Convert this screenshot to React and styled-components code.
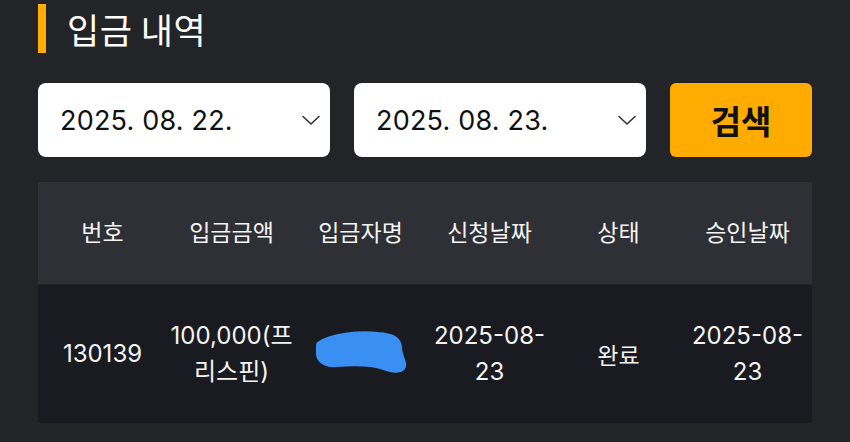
import React from 'react'
import styled, { createGlobalStyle } from 'styled-components'

const GlobalStyle = createGlobalStyle`
  html, body {
    margin: 0;
    padding: 0;
    background: #232428;
  }
  body {
    font-family: Inter, "Noto Sans CJK KR", sans-serif;
    color: #fff;
  }
`

const Page = styled.div`
  width: 850px;
  height: 442px;
  box-sizing: border-box;
  padding: 4px 38px 0 38px;
  overflow: hidden;
`

const Title = styled.h1`
  display: flex;
  align-items: center;
  gap: 21px;
  margin: 0;
  height: 49px;
  font-family: "Noto Sans CJK KR", sans-serif;
  font-size: 35px;
  font-weight: 400;
  letter-spacing: 0.5px;

  &::before {
    content: '';
    width: 8px;
    height: 49px;
    background: #ffad00;
  }
`

const SearchRow = styled.div`
  display: flex;
  gap: 24px;
  margin-top: 30px;
  height: 74px;
`

const DateBox = styled.div`
  width: 292px;
  box-sizing: border-box;
  background: #fff;
  border-radius: 8px;
  display: flex;
  align-items: center;
  justify-content: space-between;
  padding: 0 8px 0 22px;
  color: #111;
  font-size: 27px;
  letter-spacing: 0.2px;
`

const SearchButton = styled.button`
  width: 142px;
  border: none;
  border-radius: 6px;
  background: #ffab00;
  color: #111;
  font-family: "Noto Sans CJK KR", sans-serif;
  font-size: 33px;
  font-weight: 700;
  padding: 0;
`

const Table = styled.div`
  margin-top: 25px;
  width: 774px;
`

const Row = styled.div`
  display: grid;
  grid-template-columns: repeat(6, 1fr);
  align-items: center;
  height: ${p => p.$h}px;
  background: ${p => p.$bg};
  margin-top: ${p => p.$mt || 0}px;
`

const Cell = styled.div`
  text-align: center;
  padding: 0 2px;
  font-size: ${p => (p.$kr ? 23 : 24)}px;
  line-height: 36px;
  color: #f4f4f4;
  font-family: ${p => (p.$kr ? '"Noto Sans CJK KR", sans-serif' : 'Inter, "Noto Sans CJK KR", sans-serif')};
  display: flex;
  justify-content: center;
  margin-top: ${p => p.$up || 0}px;
`

const Chevron = () => (
  <svg width="22" height="22" viewBox="0 0 22 22" fill="none" stroke="#333" strokeWidth="1.6" strokeLinecap="round" strokeLinejoin="round">
    <path d="M3 7.5 L11 15 L19 7.5" />
  </svg>
)

const Scribble = () => (
  <svg width="94" height="46" viewBox="0 0 94 46">
    <path
      d="M6 14 C18 6 44 3 64 5 C78 6 84 9 84 17 C84 22 86 26 88 32 C90 39 80 39 70 35 C56 30 36 31 22 32 C12 33 5 28 6 21 Z"
      fill="#3a8ff3"
      stroke="#3a8ff3"
      strokeWidth="8"
      strokeLinejoin="round"
    />
  </svg>
)

const headers = ['번호', '입금금액', '입금자명', '신청날짜', '상태', '승인날짜']

export default function App() {
  return (
    <>
      <GlobalStyle />
      <Page>
        <Title>입금 내역</Title>
        <SearchRow>
          <DateBox>
            <span>2025. 08. 22.</span>
            <Chevron />
          </DateBox>
          <DateBox>
            <span>2025. 08. 23.</span>
            <Chevron />
          </DateBox>
          <SearchButton>검색</SearchButton>
        </SearchRow>
        <Table>
          <Row $h={102} $bg="#2f3035">
            {headers.map(h => (
              <Cell key={h} $kr $up={-4}>{h}</Cell>
            ))}
          </Row>
          <Row $h={138} $bg="#1a1b20" $mt={1}>
            <Cell>130139</Cell>
            <Cell>100,000(프리스핀)</Cell>
            <Cell><Scribble /></Cell>
            <Cell>2025-08-23</Cell>
            <Cell $kr>완료</Cell>
            <Cell>2025-08-23</Cell>
          </Row>
        </Table>
      </Page>
    </>
  )
}
